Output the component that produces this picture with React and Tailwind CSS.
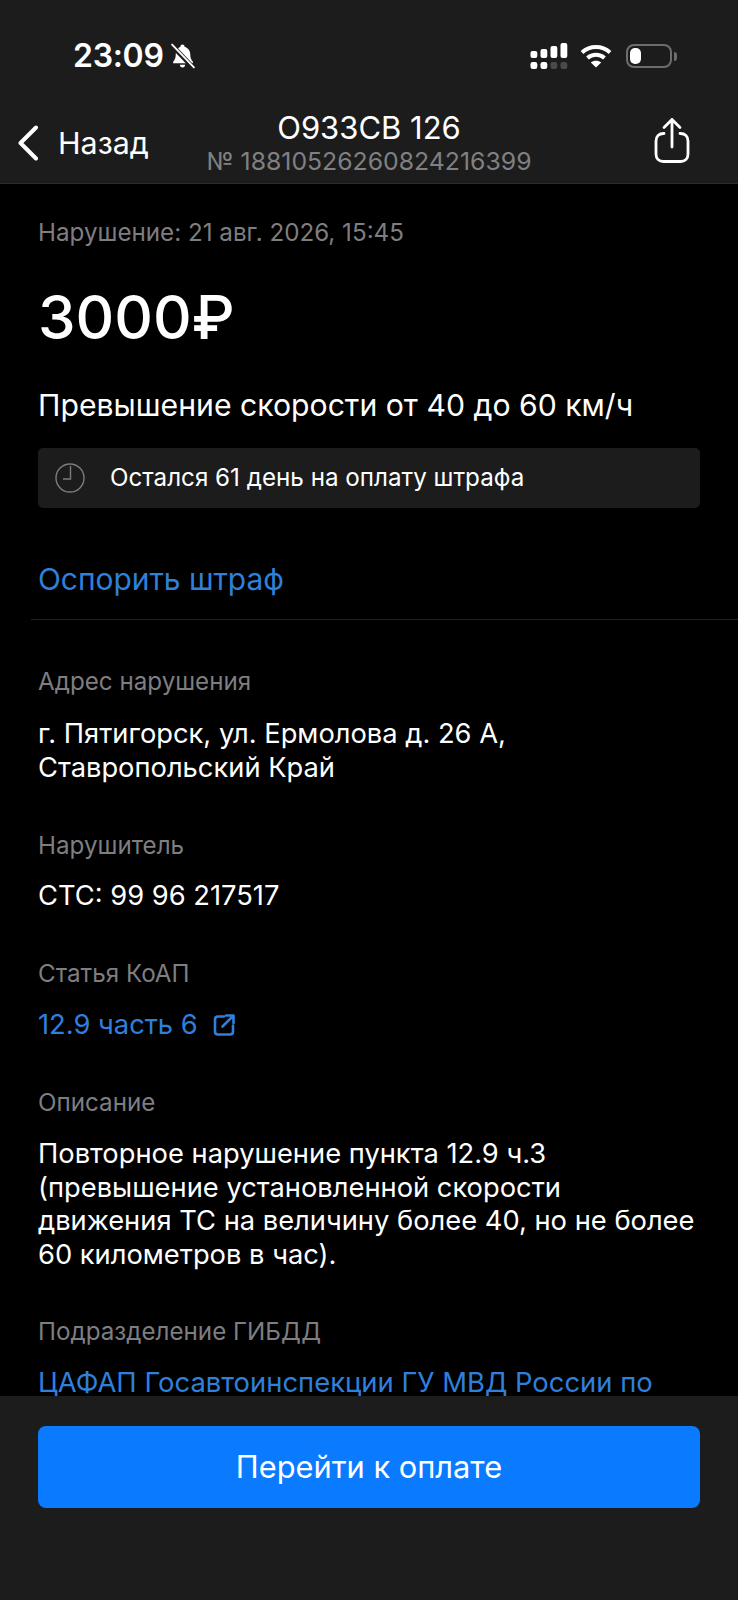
const font = { fontFamily: 'Inter, "Noto Sans", sans-serif' };

function Label({ children, className = "" }) {
  return <div className={`text-[24.2px] leading-[30px] text-[#7e7e80] ${className}`}>{children}</div>;
}

function Value({ children, className = "" }) {
  return <div className={`whitespace-nowrap text-[27.3px] leading-[33.7px] text-white ${className}`}>{children}</div>;
}

function Signal() {
  const top = [7, 9, 12, 15];
  return (
    <svg width="38" height="26" viewBox="0 0 38 26" fill="#fff">
      {top.map((h, i) => (
        <rect key={i} x={0.5 + i * 10} y={15 - h} width="6.8" height={h} rx="2" />
      ))}
      <rect x="0.5" y="19" width="6.8" height="7" rx="2.200" />
      <rect x="10.5" y="19" width="6.8" height="7" rx="2.200" />
      <rect x="20.5" y="19" width="6.8" height="7" rx="2.200" fill="#4a4a4c" />
      <rect x="30.5" y="19" width="6.8" height="7" rx="2.200" fill="#4a4a4c" />
    </svg>
  );
}

function StatusBar() {
  return (
    <div className="flex h-[75px] items-end justify-between pl-[73px] pr-[61px]">
      <div className="flex items-center gap-[5px]">
        <span className="text-[32px] font-semibold leading-[38px] tracking-[-0.3px] text-white">23:09</span>
        <svg width="27" height="28" viewBox="0 0 26 26" fill="#fff">
          <path d="M13 2c1.200 0 2 .8 2 2 3.500 1 5.500 4 5.500 7.500 0 3 .8 5 2.500 7v1.500H4v-1.500c1.700-2 2.500-4 2.500-7C6.500 8 8.500 5 11 4c0-1.200.8-2 2-2z" />
          <path d="M10.500 21.500h5c0 1.500-1 2.500-2.500 2.500s-2.500-1-2.500-2.500z" />
          <path d="M2.500 2.500 23.500 24.500" stroke="#1c1c1c" strokeWidth="4.500" />
          <path d="M3 2 24 24" stroke="#fff" strokeWidth="1.800" strokeLinecap="round" />
        </svg>
      </div>
      <div className="flex items-center gap-[12px] pb-[6px]">
        <Signal />
        <svg width="32" height="24" viewBox="0 0 32 24" fill="none" stroke="#fff" strokeWidth="4">
          <path d="M2 8.500C10 1.200 22 1.200 30 8.500" />
          <path d="M7.500 14c4.800-4.300 12.200-4.300 17 0" />
          <path d="M16 23.500 10.800 18.500c2.800-2.300 7.600-2.300 10.400 0z" fill="#fff" stroke="none" />
        </svg>
        <div className="flex items-center gap-[2px] pl-[2px]">
          <div className="flex h-[24px] w-[46px] items-center rounded-[8px] border-2 border-[#6d6d70] pl-[2px]">
            <div className="h-[16px] w-[11px] rounded-[5px] bg-white" />
          </div>
          <div className="h-[9px] w-[3px] rounded-r-full bg-[#6d6d70]" />
        </div>
      </div>
    </div>
  );
}

function NavBar() {
  return (
    <div className="relative flex h-[109px] items-start justify-between border-b border-[#2b2b2d] pl-[17px] pr-[48px] pt-[49px]">
      <div className="flex items-center gap-[19px] pt-[1px]">
        <svg width="22" height="36" viewBox="0 0 22 36" fill="none" stroke="#fff" strokeWidth="4" strokeLinecap="round" strokeLinejoin="round">
          <path d="M19 2.500 3.500 18 19 33.500" />
        </svg>
        <span className="text-[30.400px] leading-[36px] text-white">Назад</span>
      </div>
      <div className="absolute inset-x-0 top-[34px] flex flex-col items-center">
        <div className="text-[31px] leading-[38px] text-white">О933СВ 126</div>
        <div className="text-[24.800px] leading-[28px] text-[#808082]">№ 18810526260824216399</div>
      </div>
      <svg width="36" height="46" viewBox="0 0 36 46" fill="none" stroke="#fff" strokeWidth="2.800" strokeLinecap="round" strokeLinejoin="round" className="mt-[-7px]">
        <path d="M10 16.500H9.500c-4.500 0-7.500 3-7.500 7.500v13c0 4.500 3 7.500 7.500 7.500h17c4.500 0 7.500-3 7.500-7.500V24c0-4.500-3-7.500-7.500-7.500H26" />
        <path d="M18 30V2.500M10 10.500 18 2.500l8 8" />
      </svg>
    </div>
  );
}

export default function App() {
  return (
    <div className="flex h-[1600px] w-[738px] flex-col overflow-hidden bg-black" style={font}>
      <div className="bg-[#1c1c1c]">
        <StatusBar />
        <NavBar />
      </div>

      <main className="min-h-0 flex-1 overflow-hidden px-[38px]">
        <Label className="mt-[34px]">Нарушение: 21 авг. 2026, 15:45</Label>
        <div className="mt-[33px] text-[60px] font-medium leading-[72px] text-white">3000₽</div>
        <div className="mt-[33px] whitespace-nowrap text-[30.200px] leading-[38px] text-white">Превышение скорости от 40 до 60 км/ч</div>

        <div className="mt-[24px] flex h-[60px] items-center gap-[25px] rounded-[5px] bg-[#1c1c1c] pl-[17px]">
          <svg width="30" height="30" viewBox="0 0 30 30" fill="none" stroke="#7c7c7e" strokeWidth="1.400">
            <circle cx="15" cy="15" r="14" />
            <path d="M15.500 3v13H8" />
          </svg>
          <span className="text-[24.200px] leading-[30px] text-white">Остался 61 день на оплату штрафа</span>
        </div>

        <div className="mt-[52px] text-[29.900px] leading-[38px] text-[#2f80dc]">Оспорить штраф</div>
        <div className="ml-[-7px] mr-[-38px] mt-[21px] h-px bg-[#222224]" />

        <Label className="mt-[47px]">Адрес нарушения</Label>
        <Value className="mt-[20px]">
          г. Пятигорск, ул. Ермолова д. 26 А,
          <br />
          Ставропольский Край
        </Value>

        <Label className="mt-[47px]">Нарушитель</Label>
        <Value className="mt-[18px]">СТС: 99 96 217517</Value>

        <Label className="mt-[46px]">Статья КоАП</Label>
        <div className="mt-[19px] flex items-center gap-[14px] text-[27.300px] leading-[33.7px] text-[#2f80dc]">
          12.9 часть 6
          <svg width="24" height="24" viewBox="0 0 24 24" fill="none" stroke="#2f80dc" strokeWidth="2.600" strokeLinecap="round" strokeLinejoin="round">
            <path d="M12 3.500H6c-2 0-3 1-3 3v12c0 2 1 3 3 3h12c2 0 3-1 3-3v-6" />
            <path d="M10.500 13.500 21 3M14 2.500h7.500V10" />
          </svg>
        </div>

        <Label className="mt-[46px]">Описание</Label>
        <Value className="mt-[19px]">
          Повторное нарушение пункта 12.9 ч.3
          <br />
          (превышение установленной скорости
          <br />
          движения ТС на величину более 40, но не более
          <br />
          60 километров в час).
        </Value>

        <Label className="mt-[45px]">Подразделение ГИБДД</Label>
        <div className="mt-[19px] whitespace-nowrap text-[27.400px] leading-[33.7px] text-[#2f80dc]">ЦАФАП Госавтоинспекции ГУ МВД России по</div>
      </main>

      <div className="h-[204px] shrink-0 bg-[#1c1c1c] px-[38px] pt-[30px]">
        <button className="flex h-[82px] w-full items-center justify-center rounded-[8px] bg-[#0a7aff] text-[30.800px] text-white">
          Перейти к оплате
        </button>
      </div>
    </div>
  );
}
